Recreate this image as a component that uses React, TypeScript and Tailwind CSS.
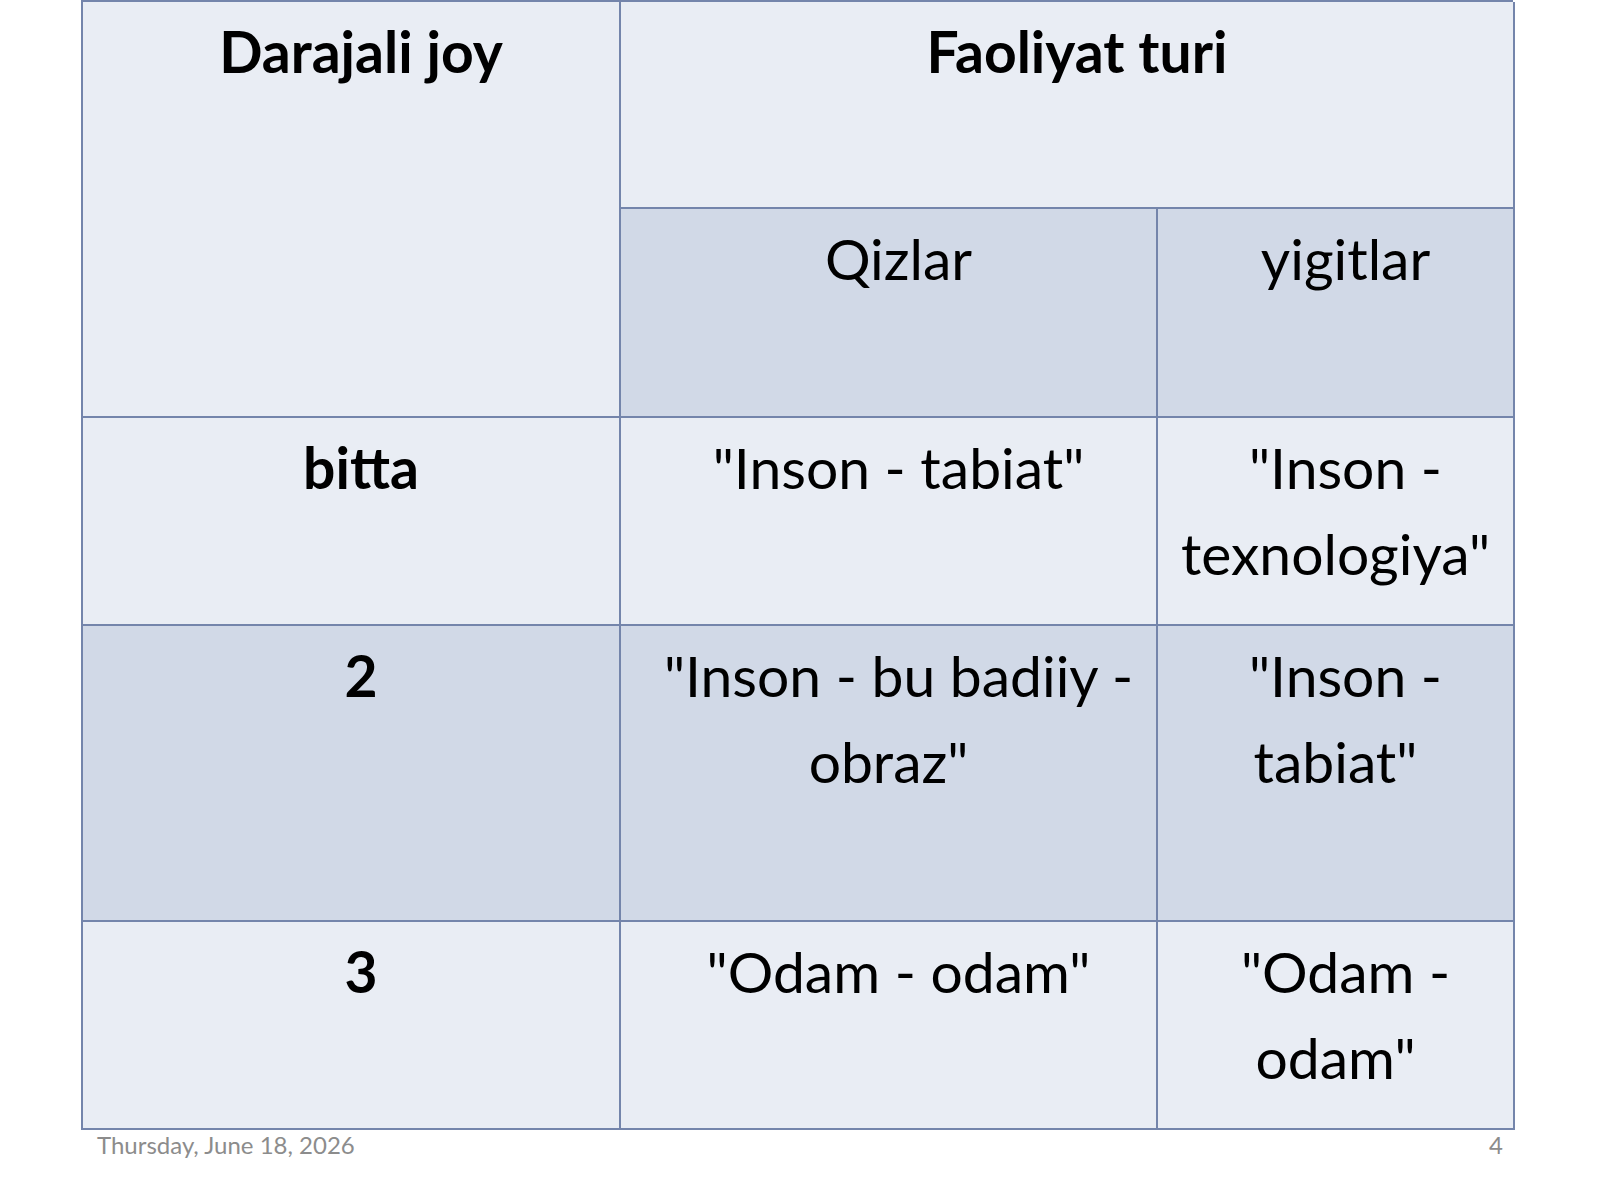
const light = "bg-[#e9edf4]";
const dark = "bg-[#d1d9e7]";

function Cell({
  children,
  className,
  bold,
}: {
  children?: React.ReactNode;
  className: string;
  bold?: boolean;
}) {
  return (
    <div
      className={`border-r-2 border-b-2 border-[#7485ab] px-[10px] pt-[6px] indent-[20px] text-center text-[57px] leading-[86px] text-black ${
        bold ? "font-bold" : "font-normal"
      } ${className}`}
    >
      {children}
    </div>
  );
}

export default function App() {
  return (
    <div
      className="w-[1600px] h-[1200px] bg-white overflow-hidden pl-[81px]"
      style={{ fontFamily: "Lato, 'Open Sans', sans-serif" }}
    >
      <div className="grid w-[1432px] grid-cols-[538px_537px_357px] grid-rows-[207px_209px_208px_296px_208px] border-l-2 border-t-2 border-[#7485ab]">
        <Cell bold className={`row-span-2 ${light}`}>
          Darajali joy
        </Cell>
        <Cell bold className={`col-span-2 ${light}`}>
          Faoliyat turi
        </Cell>
        <Cell className={dark}>Qizlar</Cell>
        <Cell className={dark}>yigitlar</Cell>

        <Cell bold className={light}>
          bitta
        </Cell>
        <Cell className={light}>"Inson - tabiat"</Cell>
        <Cell className={light}>"Inson - texnologiya"</Cell>

        <Cell bold className={dark}>
          2
        </Cell>
        <Cell className={dark}>"Inson - bu badiiy - obraz"</Cell>
        <Cell className={dark}>"Inson - tabiat"</Cell>

        <Cell bold className={light}>
          3
        </Cell>
        <Cell className={light}>"Odam - odam"</Cell>
        <Cell className={light}>"Odam - odam"</Cell>
      </div>

      <div className="flex w-[1432px] items-center justify-between pl-[16px] pr-[10px] pt-[1px] text-[24px] leading-[28px] text-[#8c8c8c]">
        <span>Thursday, June 18, 2026</span>
        <span>4</span>
      </div>
    </div>
  );
}
